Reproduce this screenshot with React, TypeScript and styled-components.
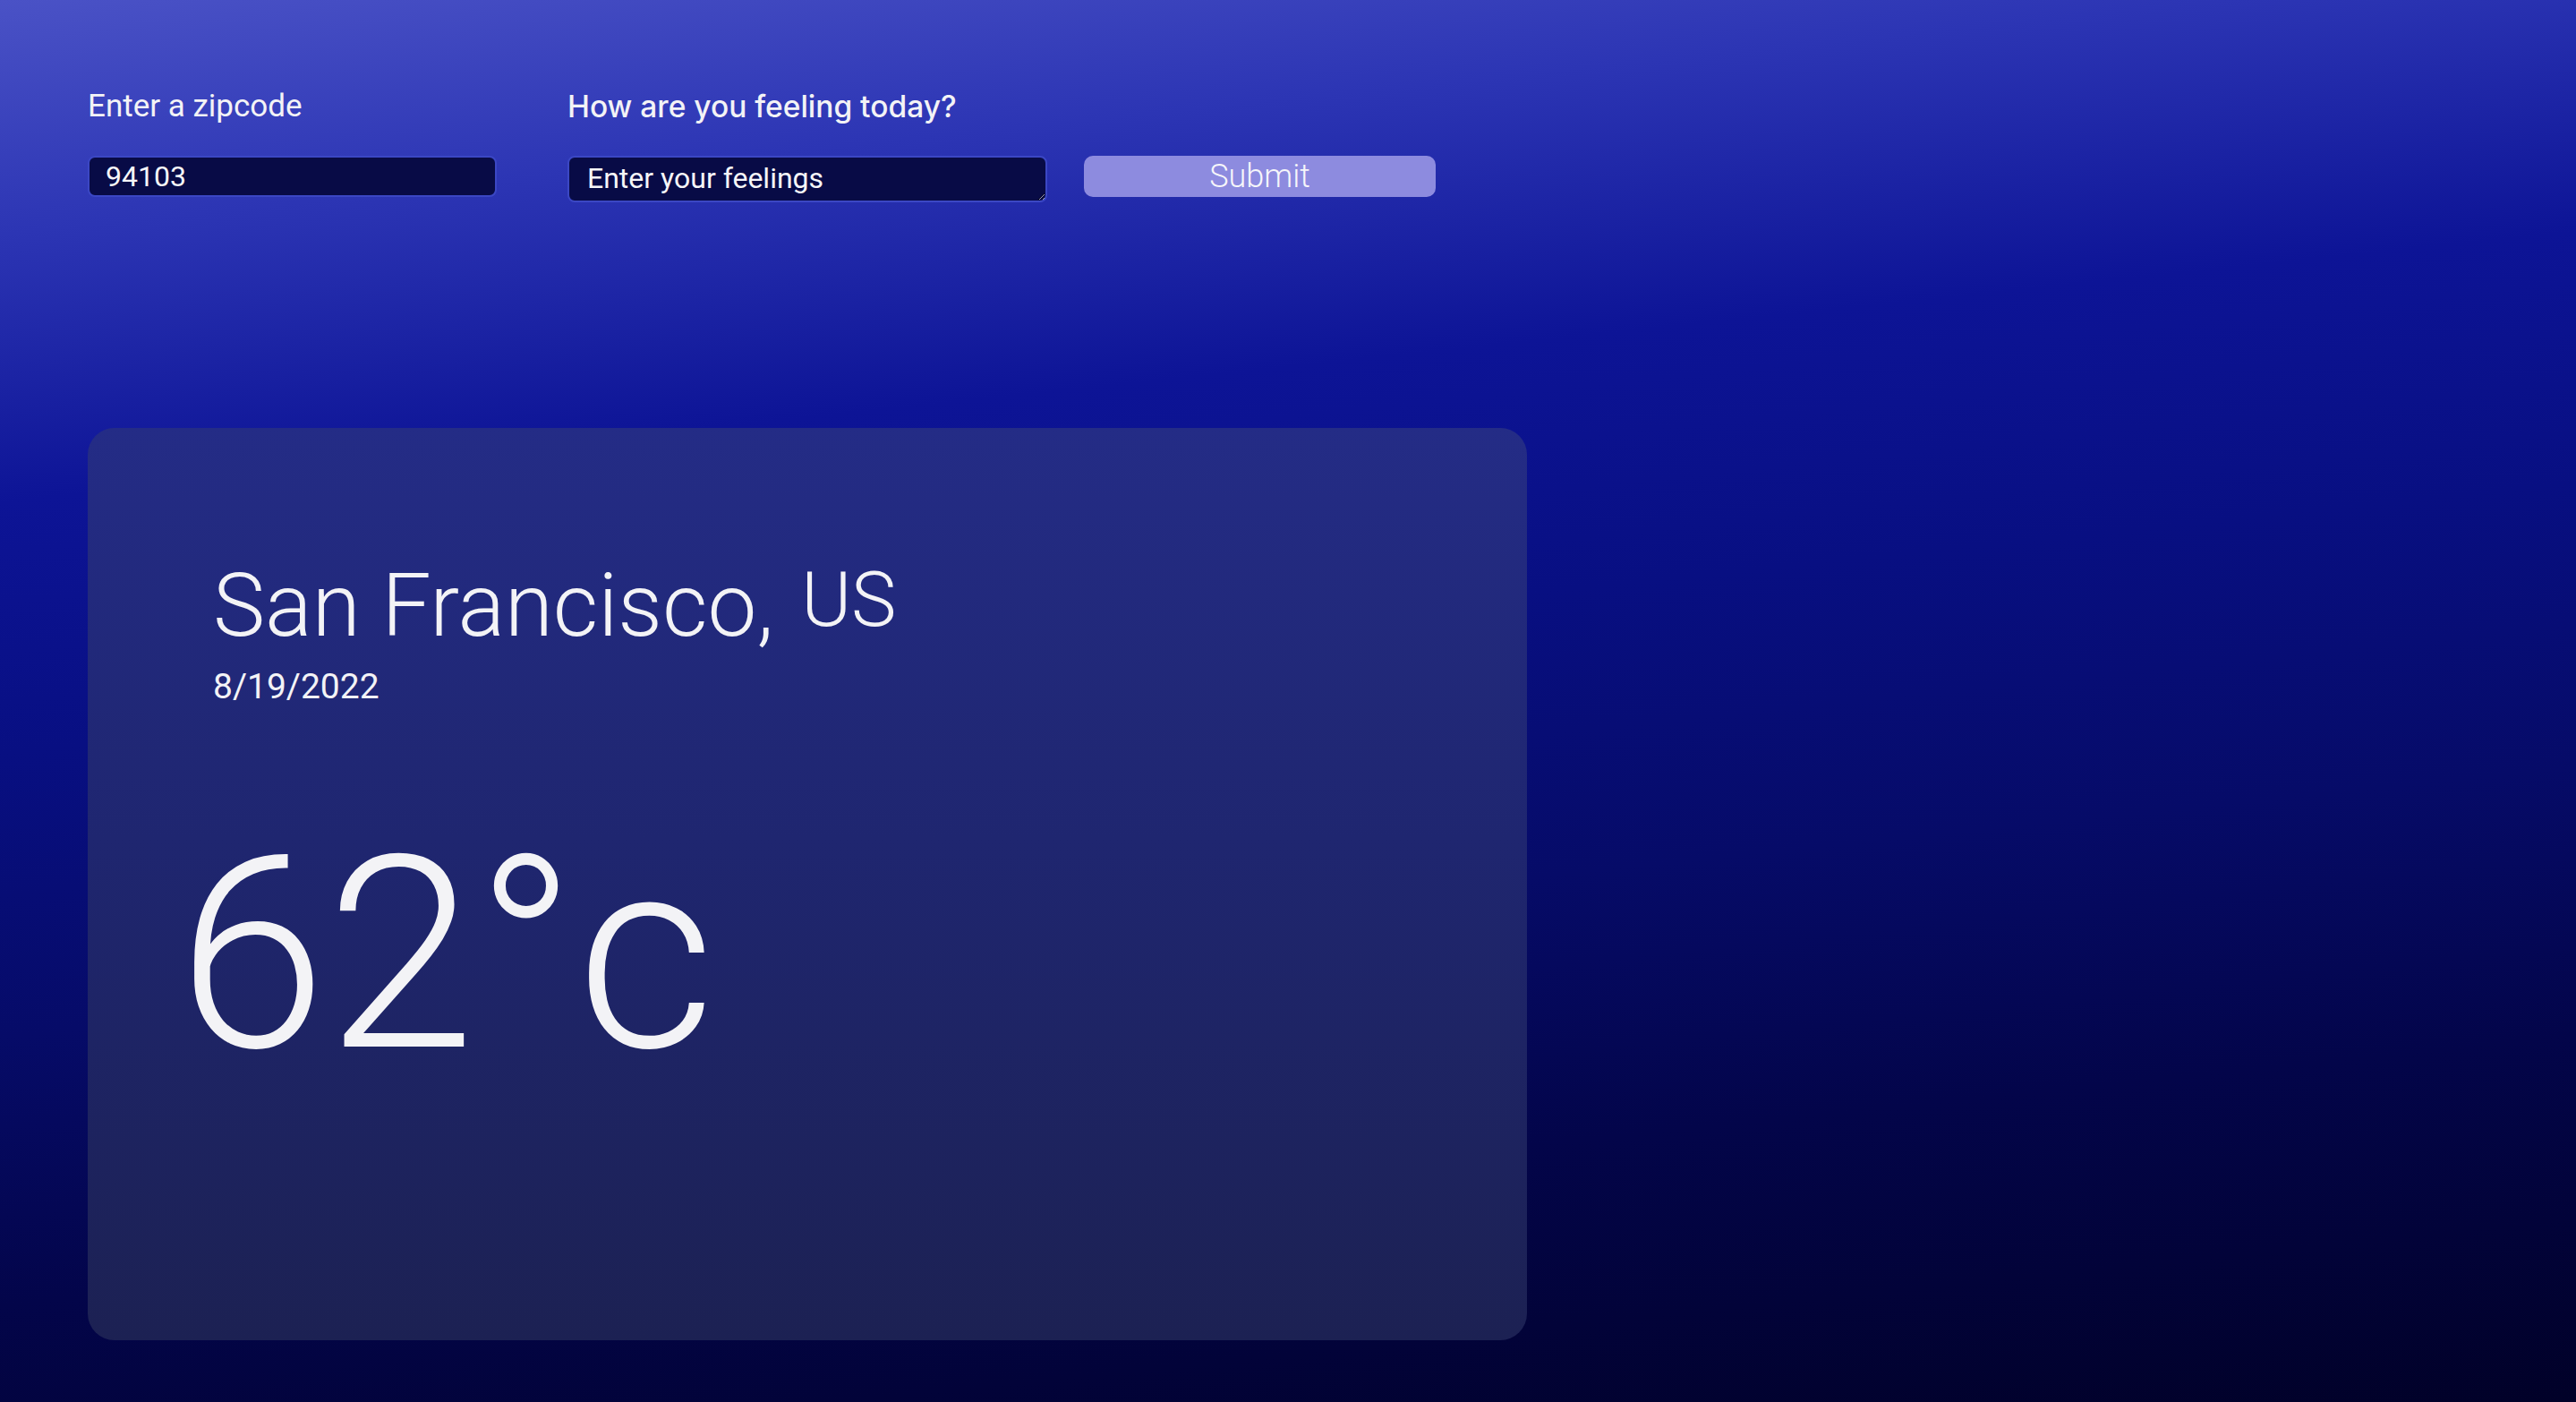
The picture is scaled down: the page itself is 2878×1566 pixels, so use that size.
import React from 'react';
import styled, { createGlobalStyle } from 'styled-components';

const GlobalStyle = createGlobalStyle`
  html,
  body {
    margin: 0;
    padding: 0;
    background: #010128;
  }

  body {
    font-family: Roboto, 'Liberation Sans', sans-serif;
    color: #f3f3f6;
  }
`;

const Page = styled.main`
  box-sizing: border-box;
  min-height: 100vh;
  padding: 98px 0 70px 98px;
  background: linear-gradient(
    174deg,
    #4a52c6 0%,
    #2c35b4 14%,
    #0d1496 30%,
    #080f82 45%,
    #060b68 62%,
    #03054a 78%,
    #010128 100%
  );
`;

const Form = styled.form`
  display: flex;
  align-items: flex-start;
`;

const Field = styled.label<{ $width: number; $space: number }>`
  display: flex;
  flex-direction: column;
  width: ${(p) => p.$width}px;
  margin-right: ${(p) => p.$space}px;
`;

const LabelText = styled.span<{ $strong?: boolean }>`
  font-family: ${(p) => (p.$strong ? 'Inter, Roboto, sans-serif' : 'Roboto, sans-serif')};
  font-size: ${(p) => (p.$strong ? 33.5 : 35)}px;
  font-weight: ${(p) => (p.$strong ? 500 : 400)};
  line-height: 42px;
  margin-bottom: 34px;
  white-space: nowrap;
`;

const controlBase = `
  box-sizing: border-box;
  width: 100%;
  margin: 0;
  border: 2px solid #3b47c4;
  border-radius: 8px;
  background: #080b46;
  color: #f6f6f8;
  font-family: Roboto, sans-serif;
  font-size: 32px;
  font-weight: 400;
  outline: none;
`;

const ZipInput = styled.input`
  ${controlBase}
  height: 46px;
  padding: 0 18px;
`;

const FeelingsInput = styled.textarea`
  ${controlBase}
  height: 52px;
  padding: 4px 20px;
  line-height: 38px;

  &::placeholder {
    color: #f6f6f8;
    opacity: 1;
  }
`;

const SubmitButton = styled.button`
  width: 393px;
  height: 46px;
  margin-top: 76px;
  border: none;
  border-radius: 10px;
  background: #8d8bdf;
  color: #f6f6fa;
  font-family: Roboto, sans-serif;
  font-size: 36px;
  font-weight: 300;
  cursor: pointer;
`;

const Card = styled.section`
  box-sizing: border-box;
  width: 1608px;
  height: 1019px;
  margin-top: 252px;
  padding: 133px 0 0 140px;
  border-radius: 30px;
  background: linear-gradient(180deg, #242c86 0%, #1f2670 45%, #1c2153 100%);
`;

const City = styled.h1`
  margin: 0;
  font-size: 98px;
  font-weight: 300;
  line-height: 118px;
  white-space: nowrap;
`;

const Country = styled.span`
  margin-left: 7px;
  font-size: 85px;
  vertical-align: 11px;
`;

const DateText = styled.div`
  margin-top: 7px;
  font-size: 39px;
  font-weight: 400;
  line-height: 48px;
`;

const Temperature = styled.div`
  margin: 126px 0 0 -40px;
  font-size: 300px;
  font-weight: 300;
  line-height: 300px;
  white-space: nowrap;
`;

export default function App() {
  return (
    <>
      <GlobalStyle />
      <Page>
        <Form onSubmit={(e) => e.preventDefault()}>
          <Field $width={457} $space={79}>
            <LabelText>Enter a zipcode</LabelText>
            <ZipInput type="text" defaultValue="94103" />
          </Field>
          <Field $width={536} $space={41}>
            <LabelText $strong>How are you feeling today?</LabelText>
            <FeelingsInput rows={1} placeholder="Enter your feelings" />
          </Field>
          <SubmitButton type="submit">Submit</SubmitButton>
        </Form>

        <Card>
          <City>
            San Francisco, <Country>US</Country>
          </City>
          <DateText>8/19/2022</DateText>
          <Temperature>62°c</Temperature>
        </Card>
      </Page>
    </>
  );
}
